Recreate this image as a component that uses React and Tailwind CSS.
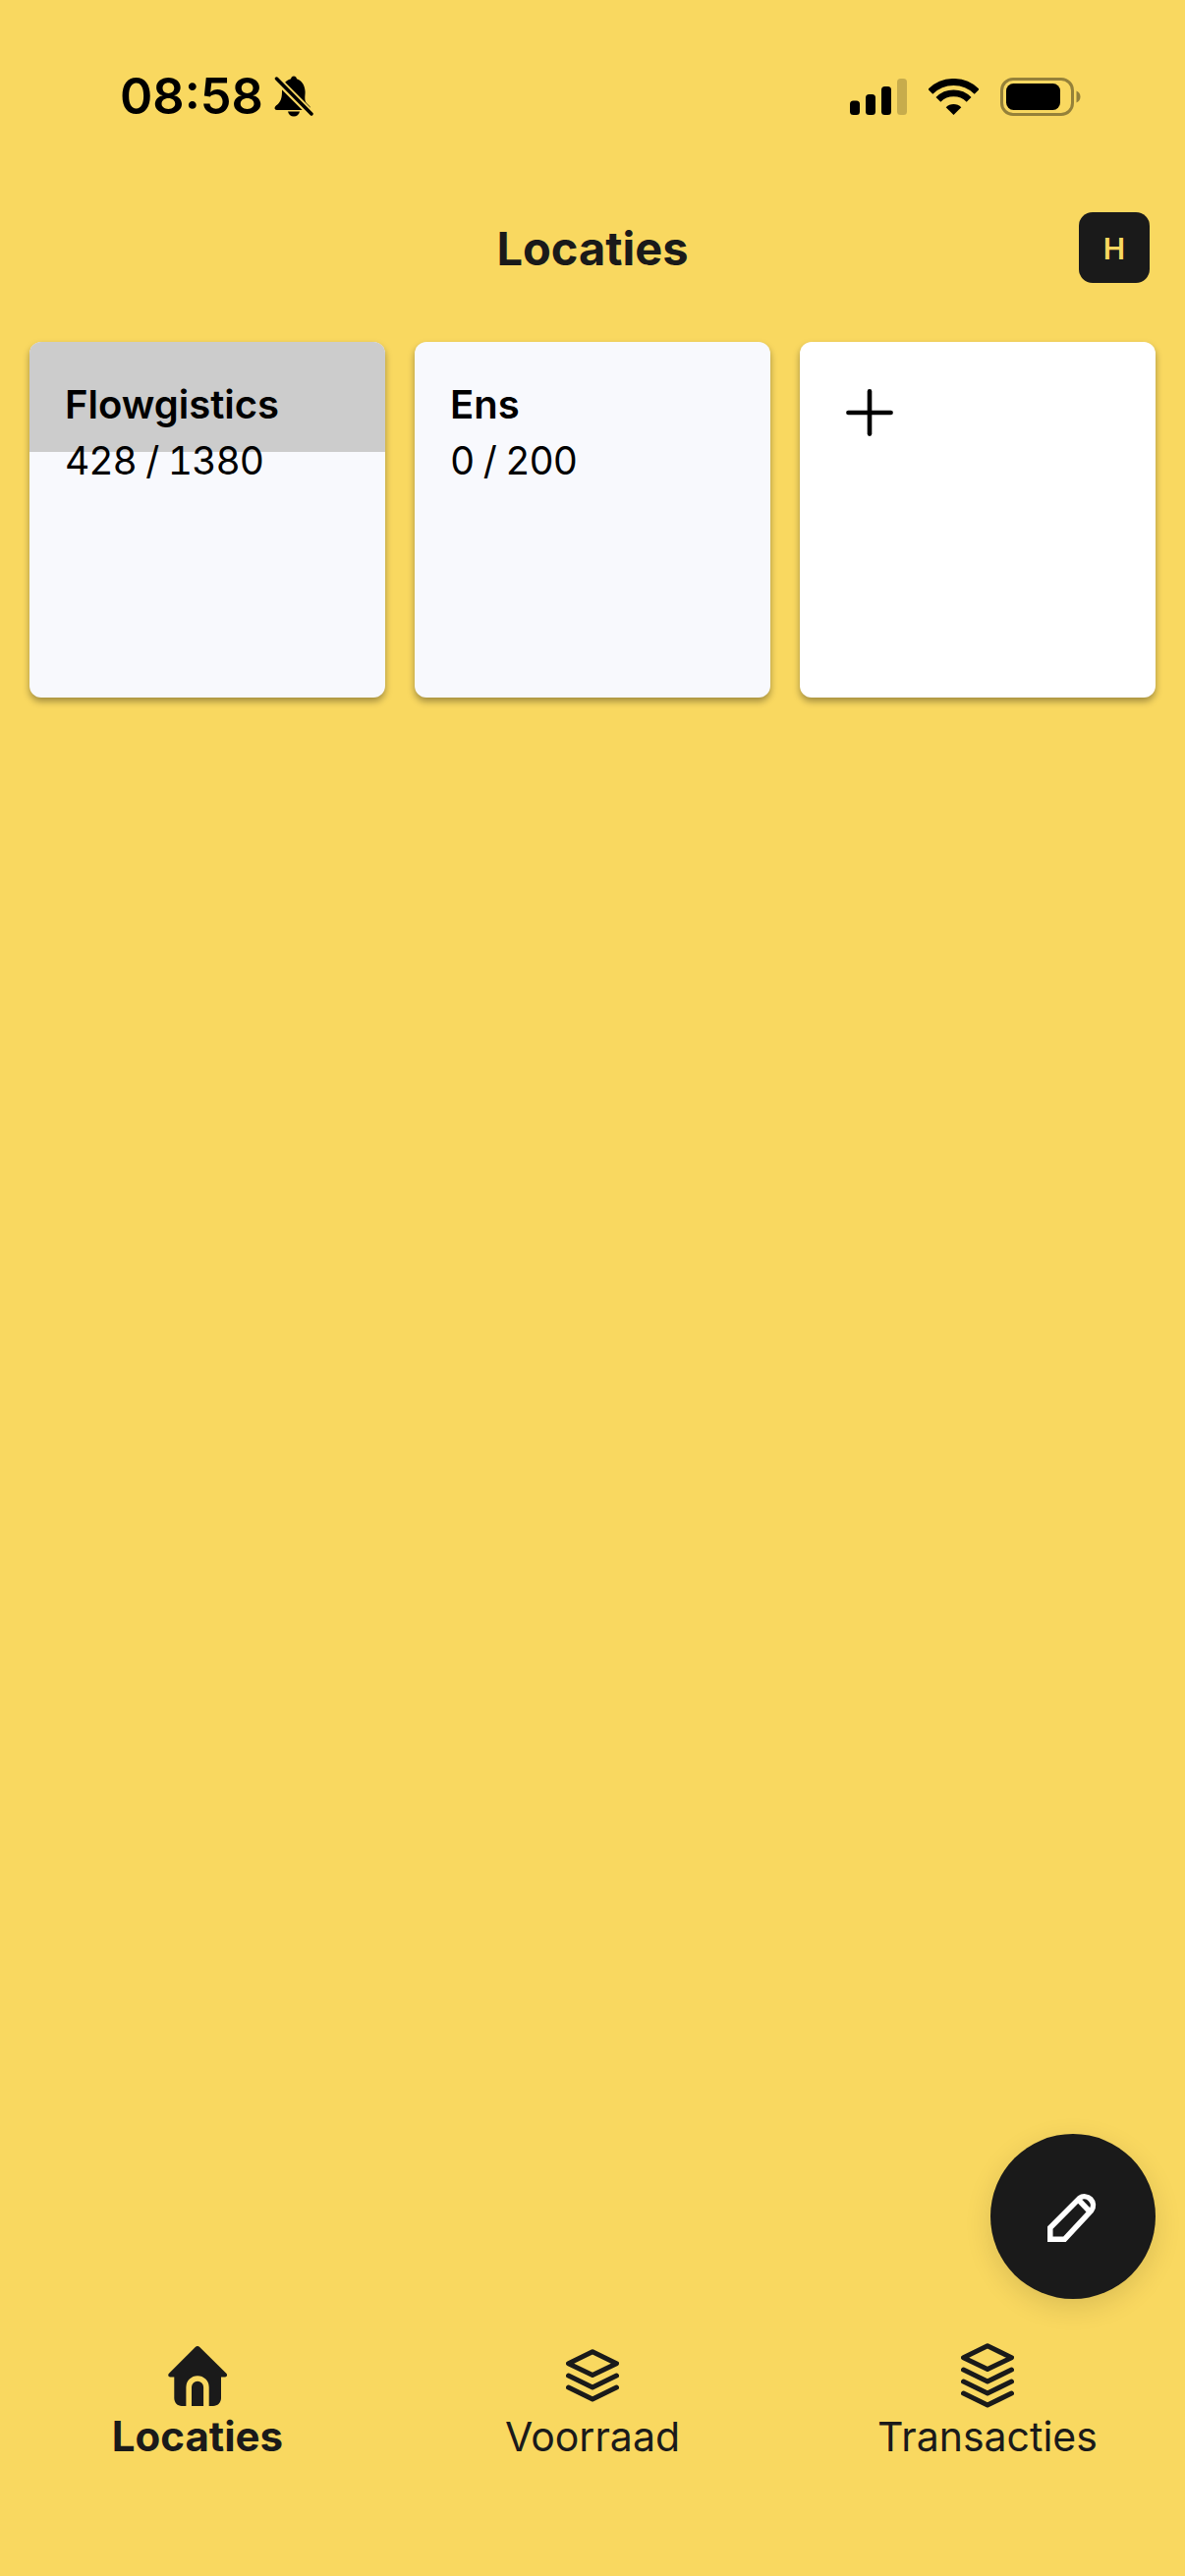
import { Plus } from "lucide-react";

const font = "font-['Inter',sans-serif]";

function Bell() {
  return (
    <svg width="40" height="42" viewBox="0 0 40 42">
      <path d="M20 0.500c-1.600 0-2.800 1.200-2.900 2.800C11.300 4.800 8 9.500 8 15.500c0 6.500-.8 9.500-3.500 12.700C3 29.900 0.500 31.200 0.500 33c0 1.300 1 2 2.300 2h31.500c1.800 0 2.600-.8 2.600-2 0-1.900-2.400-3.200-3.900-4.900C30 24.800 32 19 31.500 15.500 31 9.500 28 4.800 23 3.300 22.800 1.700 21.600.5 20 .5z" fill="#000" />
      <path d="M14 36.500h12c-.6 3-3 5-6 5s-5.400-2-6-5z" fill="#000" />
      <path d="M3 4 L38 39" stroke="#f9d860" strokeWidth="7.500" strokeLinecap="round" />
      <path d="M2.500 3 L38 39" stroke="#000" strokeWidth="3.500" strokeLinecap="round" />
    </svg>
  );
}

function Signal() {
  return (
    <svg width="58" height="37" viewBox="0 0 58 37">
      <rect x="0" y="22.500" width="10" height="14.500" rx="3.500" fill="#000" />
      <rect x="16" y="16" width="10" height="21" rx="3.500" fill="#000" />
      <rect x="32" y="8" width="10" height="29" rx="3.500" fill="#000" />
      <rect x="48" y="0" width="10" height="37" rx="3.500" fill="#000" fillOpacity="0.2" />
    </svg>
  );
}

function Wifi() {
  return (
    <svg width="51" height="37" viewBox="0 0 51 37" fill="none">
      <path d="M1.800 13.300A33.500 33.500 0 0 1 49.200 13.300" stroke="#000" strokeWidth="7" />
      <path d="M9.900 21.400A22 22 0 0 1 41.100 21.400" stroke="#000" strokeWidth="6.800" />
      <path d="M25.500 37L17.700 29.200A11 11 0 0 1 33.300 29.200Z" fill="#000" />
    </svg>
  );
}

function Battery() {
  return (
    <svg width="82" height="39" viewBox="0 0 82 39" fill="none">
      <rect x="1.500" y="1.500" width="72" height="36" rx="11.500" stroke="#000" strokeOpacity="0.4" strokeWidth="3" />
      <rect x="6" y="6" width="55" height="27" rx="7.500" fill="#000" />
      <path d="M77.500 13.500c2.500.8 4 3.200 4 6s-1.500 5.200-4 6z" fill="#000" fillOpacity="0.4" />
    </svg>
  );
}

function HomeIcon() {
  return (
    <svg width="60" height="61" viewBox="0 0 60 61">
      <path
        d="M27.800 1 L1 27.800c-1.500 1.500-.6 3.700 1.300 3.700h4v21.500c0 4.400 3.300 8 7.700 8h32c4.400 0 8-3.600 8-8V31.500h4c2 0 2.800-2.200 1.300-3.700L32.200 1c-1.200-1.300-3.200-1.300-4.400 0z"
        fill="#1a1a1a"
      />
      <path d="M21.200 61V41.800a8.850 8.850 0 0 1 17.700 0V61" fill="none" stroke="#f9d860" strokeWidth="5.600" />
    </svg>
  );
}

function StackIcon({ layers }) {
  const h = 30 + layers * 12;
  return (
    <svg width="54" height={h} viewBox={`0 0 54 ${h}`} fill="none" stroke="#1a1a1a" strokeWidth="5" strokeLinecap="round" strokeLinejoin="round">
      <path d="M27 2.800L51.500 14.700 27 26.500 2.500 14.700Z" />
      {Array.from({ length: layers }).map((_, i) => (
        <path key={i} d={`M2.500 ${27 + i * 12}L27 ${39 + i * 12}L51.500 ${27 + i * 12}`} />
      ))}
    </svg>
  );
}

function PenIcon() {
  return (
    <svg width="52" height="52" viewBox="0 0 52 52" fill="none" stroke="#fff" strokeWidth="5.500" strokeLinejoin="miter">
      <path d="M2.800 49.200V37.500L32.500 7.500a8.800 8.800 0 0 1 12.200 12.400L17.500 49.200Z" />
      <path d="M31.500 9L43 21" />
    </svg>
  );
}

function LocationCard({ name, count, pressed }) {
  return (
    <div className="relative h-[362px] w-[362px] overflow-hidden rounded-[12px] bg-[#f8f9fd] shadow-[0_4px_7px_rgba(0,0,0,0.35)]">
      {pressed && <div className="absolute inset-x-0 top-0 h-[112px] bg-[#cccccc]" />}
      <div className="relative px-[36px] pt-[39px] text-black">
        <p className="text-[40px] leading-[50px] font-semibold">{name}</p>
        <p className="mt-[7px] text-[39px] leading-[50px] font-normal tabular-nums tracking-[-1px]">{count}</p>
      </div>
    </div>
  );
}

function NavItem({ icon, label, active }) {
  return (
    <div className="flex flex-col items-center">
      <div className="flex h-[66px] items-center justify-center">{icon}</div>
      <span className={`mt-[4px] leading-[50px] text-[#1a1a1a] ${active ? "text-[42px] font-bold" : "text-[41px] font-normal"}`}>
        {label}
      </span>
    </div>
  );
}

export default function App() {
  return (
    <div className={`${font} relative flex h-[2622px] w-[1206px] flex-col overflow-hidden bg-[#f9d860]`}>
      {/* Status bar */}
      <div className="flex h-[42px] mt-[77px] items-center justify-between pl-[122px] pr-[106px]">
        <div className="flex items-center gap-[11px]">
          <span className="text-[50.500px] leading-[42px] font-semibold text-black">08:58</span>
          <Bell />
        </div>
        <div className="flex items-center gap-[22px]">
          <Signal />
          <Wifi />
          <Battery />
        </div>
      </div>

      {/* Header */}
      <div className="relative mt-[97px] flex h-[72px] items-center justify-center">
        <h1 className="pt-[2px] text-[47px] leading-[56px] font-bold text-[#1a1a1a]">Locaties</h1>
        <button className="absolute right-[36px] top-0 flex h-[72px] w-[72px] items-center justify-center rounded-[14px] bg-[#1a1a1a] pt-[2px] text-[30px] font-semibold text-[#f9d860]">
          H
        </button>
      </div>

      {/* Cards */}
      <div className="mt-[60px] flex gap-[30px] px-[30px]">
        <LocationCard name="Flowgistics" count="428 / 1380" pressed />
        <LocationCard name="Ens" count="0 / 200" />
        <div className="h-[362px] w-[362px] rounded-[12px] bg-white pl-[34px] pt-[35px] shadow-[0_4px_7px_rgba(0,0,0,0.35)]">
          <Plus size={74} strokeWidth={1.5} color="#000" />
        </div>
      </div>

      <div className="flex-1" />

      {/* Bottom nav */}
      <div className="grid grid-cols-3 pb-[117px]">
        <NavItem icon={<HomeIcon />} label="Locaties" active />
        <NavItem icon={<StackIcon layers={2} />} label="Voorraad" />
        <NavItem icon={<StackIcon layers={3} />} label="Transacties" />
      </div>

      {/* FAB */}
      <button className="absolute left-[1008px] top-[2172px] flex h-[168px] w-[168px] items-center justify-center rounded-full bg-[#1a1a1a] shadow-[0_8px_28px_rgba(0,0,0,0.12)]">
        <PenIcon />
      </button>
    </div>
  );
}
